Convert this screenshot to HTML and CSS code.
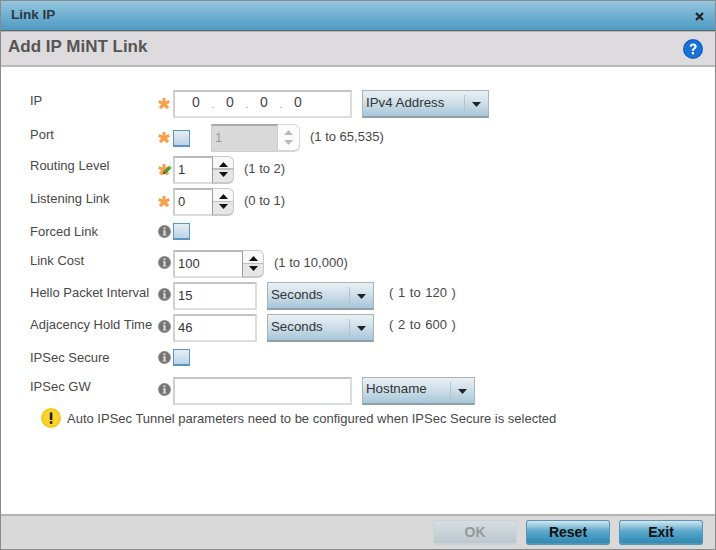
FILE: index.html
```html
<!DOCTYPE html>
<html lang="en">
<head>
<meta charset="utf-8">
<title>Link IP</title>
<link rel="stylesheet" href="styles.css">
</head>
<body>
<svg class="defs" width="0" height="0" aria-hidden="true">
  <defs>
    <symbol id="star" viewBox="0 0 14 14">
      <path d="M5.2 0H8.8L8.6 4 12.4 2.2 14 5.6 10.2 7.2 13 10.6 10.2 13 7 9.8 3.8 13 1 10.6 3.8 7.2 0 5.6 1.6 2.2 5.4 4Z" fill="#f9a04c"/>
    </symbol>
    <symbol id="info" viewBox="0 0 14 14">
      <circle cx="7" cy="7" r="7" fill="#8a8a8a"/>
      <circle cx="7" cy="7" r="5.8" fill="#737373"/>
      <rect x="5.8" y="2.6" width="2.4" height="2" fill="#d9d9d9"/>
      <path d="M5.4 5.6H8.2V10.2H9V11.4H5.2V10.2H5.9V6.8H5.4Z" fill="#d9d9d9"/>
    </symbol>
    <symbol id="up" viewBox="0 0 9 5"><path d="M4.5 0 9 5H0Z"/></symbol>
    <symbol id="down" viewBox="0 0 9 5"><path d="M0 0H9L4.5 5Z"/></symbol>
  </defs>
</svg>
<div class="dialog">
  <header class="titlebar">
    <span class="title">Link IP</span>
    <svg class="close" width="9" height="9" viewBox="0 0 9 9"><path d="M1 1 8 8M8 1 1 8" stroke="#222" stroke-width="2.2" fill="none"/></svg>
  </header>
  <div class="subhead">
    <h1>Add IP MiNT Link</h1>
    <svg class="help" width="20" height="20" viewBox="0 0 20 20">
      <circle cx="10" cy="10" r="10" fill="#0f62c4"/>
      <circle cx="10" cy="10" r="8.6" fill="#1872d8"/>
      <path d="M6.6 7.6C6.8 5.6 8.2 4.6 10.1 4.6 12.2 4.6 13.6 5.8 13.6 7.5 13.6 9 12.7 9.6 11.7 10.3 11 10.8 10.9 11.1 10.9 12H8.9C8.9 10.6 9.3 10 10.2 9.3 11 8.7 11.4 8.4 11.4 7.6 11.4 6.9 10.9 6.4 10.1 6.4 9.2 6.4 8.8 6.9 8.7 7.8Z" fill="#fff"/>
      <rect x="8.8" y="13" width="2.2" height="2.3" fill="#fff"/>
    </svg>
  </div>
  <main class="form">
    <span class="label">IP</span>
    <svg class="mark star"><use href="#star"/></svg>
    <div class="field">
      <div class="box wide ip"><span>0</span><i>.</i><span>0</span><i>.</i><span>0</span><i>.</i><span>0</span></div>
      <div class="select ipv4"><span class="value">IPv4 Address</span><span class="caret"><svg width="9" height="5"><use href="#down"/></svg></span></div>
    </div>

    <span class="label">Port</span>
    <svg class="mark star"><use href="#star"/></svg>
    <div class="field port">
      <span class="check"></span>
      <div class="spinner disabled">
        <span class="spin-input w67">1</span>
        <span class="spin-btns"><svg width="9" height="5"><use href="#up"/></svg><svg width="9" height="5"><use href="#down"/></svg></span>
      </div>
      <span class="hint">(1 to 65,535)</span>
    </div>

    <span class="label tight">Routing Level</span>
    <span class="markwrap">
      <svg class="mark star"><use href="#star"/></svg>
      <svg class="pencil" width="12" height="12" viewBox="0 0 12 12">
        <path d="M1.5 10.5 2.6 7.2 8.6 1.4 11 3.6 5 9.6Z" fill="#4f9a2c"/>
        <path d="M8.6 1.4 11 3.6 10 4.7 7.6 2.4Z" fill="#a9c98a"/>
        <path d="M1.5 10.5 2.6 7.2 5 9.6Z" fill="#8a4a3a"/>
      </svg>
    </span>
    <div class="field">
      <div class="spinner">
        <span class="spin-input w39">1</span>
        <span class="spin-btns"><svg width="9" height="5"><use href="#up"/></svg><svg width="9" height="5"><use href="#down"/></svg></span>
      </div>
      <span class="hint">(1 to 2)</span>
    </div>

    <span class="label">Listening Link</span>
    <svg class="mark star"><use href="#star"/></svg>
    <div class="field">
      <div class="spinner">
        <span class="spin-input w39">0</span>
        <span class="spin-btns"><svg width="9" height="5"><use href="#up"/></svg><svg width="9" height="5"><use href="#down"/></svg></span>
      </div>
      <span class="hint">(0 to 1)</span>
    </div>

    <span class="label tight">Forced Link</span>
    <svg class="mark info flat"><use href="#info"/></svg>
    <div class="field"><span class="check flat"></span></div>

    <span class="label">Link Cost</span>
    <svg class="mark info"><use href="#info"/></svg>
    <div class="field">
      <div class="spinner">
        <span class="spin-input w69">100</span>
        <span class="spin-btns"><svg width="9" height="5"><use href="#up"/></svg><svg width="9" height="5"><use href="#down"/></svg></span>
      </div>
      <span class="hint">(1 to 10,000)</span>
    </div>

    <span class="label">Hello Packet Interval</span>
    <svg class="mark info"><use href="#info"/></svg>
    <div class="field">
      <div class="box narrow">15</div>
      <div class="select seconds"><span class="value">Seconds</span><span class="caret"><svg width="9" height="5"><use href="#down"/></svg></span></div>
      <span class="hint range">( 1 to 120 )</span>
    </div>

    <span class="label">Adjacency Hold Time</span>
    <svg class="mark info"><use href="#info"/></svg>
    <div class="field">
      <div class="box narrow">46</div>
      <div class="select seconds"><span class="value">Seconds</span><span class="caret"><svg width="9" height="5"><use href="#down"/></svg></span></div>
      <span class="hint range">( 2 to 600 )</span>
    </div>

    <span class="label tight">IPSec Secure</span>
    <svg class="mark info flat"><use href="#info"/></svg>
    <div class="field"><span class="check flat"></span></div>

    <span class="label tight">IPSec GW</span>
    <svg class="mark info"><use href="#info"/></svg>
    <div class="field">
      <div class="box wide"></div>
      <div class="select hostname"><span class="value">Hostname</span><span class="caret"><svg width="9" height="5"><use href="#down"/></svg></span></div>
    </div>

    <div class="warning">
      <svg width="20" height="20" viewBox="0 0 20 20">
        <circle cx="10" cy="10" r="10" fill="#f7c61a"/>
        <circle cx="10" cy="10" r="8" fill="#fbd52c"/>
        <rect x="8.8" y="4.4" width="2.6" height="7.6" fill="#222"/>
        <rect x="8.8" y="13.2" width="2.6" height="2.6" fill="#222"/>
      </svg>
      <span>Auto IPSec Tunnel parameters need to be configured when IPSec Secure is selected</span>
    </div>
  </main>
  <footer class="footer">
    <button class="btn off" type="button">OK</button>
    <button class="btn" type="button">Reset</button>
    <button class="btn" type="button">Exit</button>
  </footer>
</div>
</body>
</html>
```
FILE: styles.css
```css
* { box-sizing: border-box; }
html, body { margin: 0; padding: 0; height: 100%; overflow: hidden; }
body { font-family: "Liberation Sans", Arial, sans-serif; font-size: 13px; color: #484848; background: #fff; }
.defs { display: block; height: 0; }
.dialog { width: 716px; height: 550px; border: 1px solid #8a8a8a; display: flex; flex-direction: column; background: #fff; }

.titlebar { height: 30px; flex: none; display: flex; align-items: center; justify-content: space-between; padding: 0 11px 3px 10px; background: linear-gradient(#93c5de, #4f9bc3); border-bottom: 1px solid #5a6a72; }
.title { font-weight: bold; font-size: 13.5px; color: #2b3a44; }
.close { margin-top: 5px; }

.subhead { height: 36px; flex: none; display: flex; align-items: center; justify-content: space-between; padding: 0 12px 0 7px; background: #dddbde; border-top: 1px solid #b5b5b5; border-bottom: 2px solid #b9b9b9; }
.subhead h1 { margin: 0 0 4px; font-size: 17px; font-weight: bold; color: #555; }
.help { margin-top: 0; }

.form { flex: 1; display: grid; grid-template-columns: 128px 15px 1fr; grid-template-rows: 34px 32px 32px 34px 28px 32px 32px 34px 29px 32px 30px; padding: 23px 0 0 29px; align-content: start; }
.label { padding-top: 3px; white-space: nowrap; }
.label.tight { padding-top: 2px; }
.mark { display: block; }
.star { width: 12px; height: 12px; margin-top: 8px; }
.info { width: 13px; height: 13px; margin-top: 6px; }
.info.flat { margin-top: 3px; }
.markwrap { position: relative; display: block; }
.pencil { position: absolute; left: 3px; top: 8px; }
.field { display: flex; align-items: flex-start; }

.box { height: 28px; background: #fff; border: 2px solid #dcdcdc; border-top-color: #c4c4c4; border-left-color: #d0d0d0; line-height: 24px; padding-left: 3px; color: #333; }
.wide { width: 179px; }
.narrow { width: 84px; }
.ip { display: flex; padding-left: 16px; color: #444; font-size: 14px; }
.ip span { width: 10px; text-align: center; line-height: 20px; }
.ip i { width: 24px; font-style: normal; text-align: center; line-height: 26px; color: #888; font-size: 10px; }

.select { height: 28px; display: flex; align-items: center; margin-left: 10px; border: 1px solid #a9b3b9; border-bottom: 2px solid #8da0ab; background: linear-gradient(#e9f0f3 0%, #cfe0e9 45%, #a7c6d8 100%); color: #333; font-size: 13.3px; }
.select .value { flex: 1; padding: 0 0 3px 3px; white-space: nowrap; }
.select .caret { width: 24px; height: 18px; border-left: 1px solid #b5c2c9; display: flex; align-items: center; justify-content: center; padding-top: 2px; }
.select svg { fill: #222; display: block; }
.ipv4 { width: 127px; }
.seconds { width: 107px; }
.hostname { width: 113px; }
.hostname .value { padding-bottom: 5px; }

.check { width: 17px; height: 17px; margin-top: 6px; border: 1px solid #5b93c4; border-bottom-width: 2px; background: linear-gradient(#e6eef5, #bcd2e6); display: block; }
.check.flat { margin-top: 1px; }
.port .spinner { margin-left: 21px; }

.spinner { display: flex; height: 28px; }
.spin-input { height: 28px; background: #fff; border: 2px solid #dcdcdc; border-top-color: #bcbcbc; border-left-color: #cfcfcf; border-right: 0; line-height: 24px; padding-left: 3px; color: #333; }
.w39 { width: 39px; }
.w67 { width: 67px; }
.w69 { width: 69px; }
.spin-btns { width: 22px; height: 28px; display: flex; flex-direction: column; align-items: center; justify-content: space-around; padding: 3px 0; border: 1px solid #c8c8c8; border-bottom-width: 2px; border-left: 1px solid #9a9a9a; border-radius: 0 6px 6px 0; background: linear-gradient(#f8f8f8 0 46%, #c0c0c0 46% 52%, #e6e6e6 52% 100%); }
.spin-btns svg { fill: #111; display: block; }
.disabled .spin-input { background: #d9d9d9; border: 1px solid #cfcfcf; border-top: 2px solid #aaa; color: #999; }
.disabled .spin-btns { border-left: 0; border-color: #d6d6d6; background: #fbfbfb; }
.disabled .spin-btns svg { fill: #b9b9b9; }
.hint { margin-left: 10px; padding-top: 5px; }
.range { margin-left: 15px; padding-top: 3px; word-spacing: 1px; }

.warning { grid-column: 1 / -1; display: flex; align-items: center; gap: 6px; margin: -1px 0 0 11px; height: 20px; }

.footer { height: 35px; flex: none; margin-top: auto; display: flex; align-items: center; justify-content: flex-end; gap: 9px; padding-right: 11px; background: #d9d9d9; border-top: 2px solid #b3b3b3; }
.btn { width: 84px; height: 25px; padding: 0; font: bold 14px "Liberation Sans", Arial, sans-serif; color: #111; border: 1px solid #5c93b2; border-bottom-width: 2px; border-radius: 3px; background: linear-gradient(#d2e7f0 0%, #5da9cc 45%, #2e8ab4 100%); }
.btn.off { color: #999; border-color: #c8d2d7; background: linear-gradient(#d6dee2, #bcc8ce); }
.btn:last-child { margin-right: 1px; }
```
